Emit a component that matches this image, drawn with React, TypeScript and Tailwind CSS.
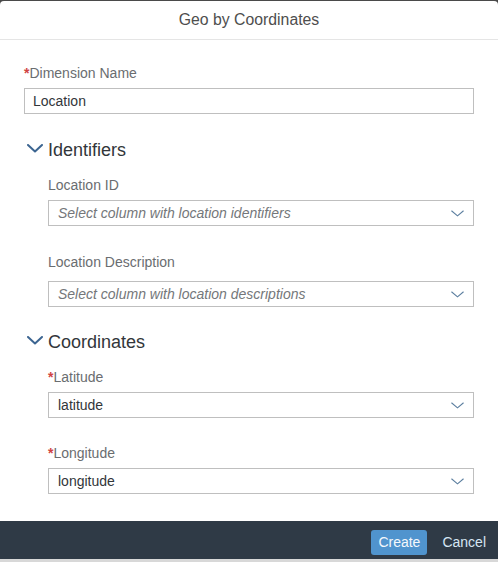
import React from 'react';

const font = { fontFamily: '"Liberation Sans", Arial, sans-serif' };

function Chevron({ className }: { className?: string }) {
  return (
    <svg viewBox="0 0 16 9" className={className} fill="none">
      <path d="M1 1 L8 7.5 L15 1" stroke="currentColor" strokeWidth="2" strokeLinecap="round" strokeLinejoin="round" />
    </svg>
  );
}

function SelectArrow() {
  return (
    <svg viewBox="0 0 14 7" className="w-[13px] h-[7px] text-[#5b7e9f]" fill="none">
      <path d="M0.5 0.5 L7 6 L13.5 0.5" stroke="currentColor" strokeWidth="1.2" />
    </svg>
  );
}

function Label({ text, required, className }: { text: string; required?: boolean; className?: string }) {
  return (
    <div className={`text-[14px] leading-[16px] text-[#6a6d70] ${className ?? ''}`}>
      {required && <span className="text-[#d04343] font-bold">*</span>}
      {text}
    </div>
  );
}

function Select({ value, placeholder }: { value?: string; placeholder?: string }) {
  return (
    <div className="h-[26px] border border-[#bfbfbf] bg-white flex items-center pl-[9px] pr-[9px]">
      <span
        className={
          value
            ? 'flex-1 text-[14px] text-[#32363a]'
            : 'flex-1 text-[14px] italic text-[#74777a]'
        }
      >
        {value ?? placeholder}
      </span>
      <SelectArrow />
    </div>
  );
}

function Section({ title }: { title: string }) {
  return (
    <div className="flex items-center h-[24px]">
      <Chevron className="w-[16px] h-[9px] ml-[3px] mr-[5px] text-[#3c6591] -mt-[4px]" />
      <span className="text-[18px] leading-[24px] text-[#32363a]">{title}</span>
    </div>
  );
}

export default function App() {
  return (
    <div className="w-[498px] h-[562px] bg-[#4a4a4a] pt-px overflow-hidden" style={font}>
      <div className="bg-white rounded-t-[4px] flex flex-col h-[558px]">
        {/* Header */}
        <div className="h-[39px] border-b border-[#e5e5e5] flex items-center justify-center">
          <span className="text-[15.8px] text-[#4e4e4e]">Geo by Coordinates</span>
        </div>

        {/* Content */}
        <div className="flex-1 px-6 pt-[25px]">
          <Label text="Dimension Name" required className="mb-[7px]" />
          <div className="h-[26px] border border-[#bfbfbf] flex items-center pl-[8px] text-[14px] text-[#32363a]">
            Location
          </div>

          <div className="mt-[24px]">
            <Section title="Identifiers" />
            <div className="pl-6">
              <Label text="Location ID" className="mt-[15px] mb-[7px]" />
              <Select placeholder="Select column with location identifiers" />
              <Label text="Location Description" className="mt-[28px] mb-[11px]" />
              <Select placeholder="Select column with location descriptions" />
            </div>
          </div>

          <div className="mt-[23px]">
            <Section title="Coordinates" />
            <div className="pl-6">
              <Label text="Latitude" required className="mt-[15px] mb-[7px]" />
              <Select value="latitude" />
              <Label text="Longitude" required className="mt-[27px] mb-[7px]" />
              <Select value="longitude" />
            </div>
          </div>
        </div>

        {/* Footer */}
        <div className="h-[38px] bg-[#2f3a46] flex items-center justify-end pr-[12px] gap-[15px]">
          <button className="h-[25px] px-[7px] rounded-[3px] bg-[#5094ce] text-[14px] text-[#f4f8fc] mt-[4px]">
            Create
          </button>
          <button className="text-[14px] text-[#d6e6f4] mt-[4px]">Cancel</button>
        </div>
      </div>
      <div className="h-[3px] bg-[#d8d8d8]" />
    </div>
  );
}
